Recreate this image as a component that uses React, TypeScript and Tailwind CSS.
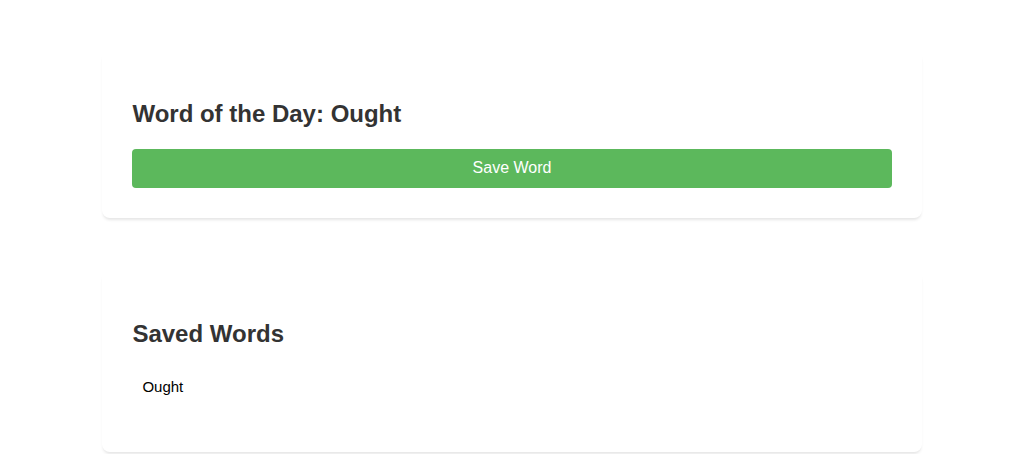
export default function App() {
  const saved = ['Ought'];

  return (
    <div className="min-h-screen bg-white pt-[50px] font-['Liberation_Sans',Arial,sans-serif]">
      {/* Word of the day card */}
      <div className="mx-auto w-[80%] rounded-lg bg-white p-[30px] shadow-[0_3px_3px_-1px_rgba(0,0,0,0.1)]">
        <h2 className="mt-[20px] mb-[21px] text-[24px] font-bold leading-[27.6px] text-[#333]">
          Word of the Day: Ought
        </h2>
        <button className="block h-[39px] w-full rounded-[4px] bg-[#5cb85c] text-[16px] text-white">
          Save Word
        </button>
      </div>

      {/* Saved words card */}
      <div className="mx-auto mt-[52px] w-[80%] rounded-lg bg-white p-[30px] shadow-[0_3px_3px_-1px_rgba(0,0,0,0.1)]">
        <h2 className="mt-[20px] mb-[21px] text-[24px] font-bold leading-[27.6px] text-[#333]">
          Saved Words
        </h2>
        <ul className="mb-[16px]">
          {saved.map((w) => (
            <li key={w} className="p-[10px] text-[15px] leading-[17.5px] text-black">
              {w}
            </li>
          ))}
        </ul>
      </div>
    </div>
  );
}
